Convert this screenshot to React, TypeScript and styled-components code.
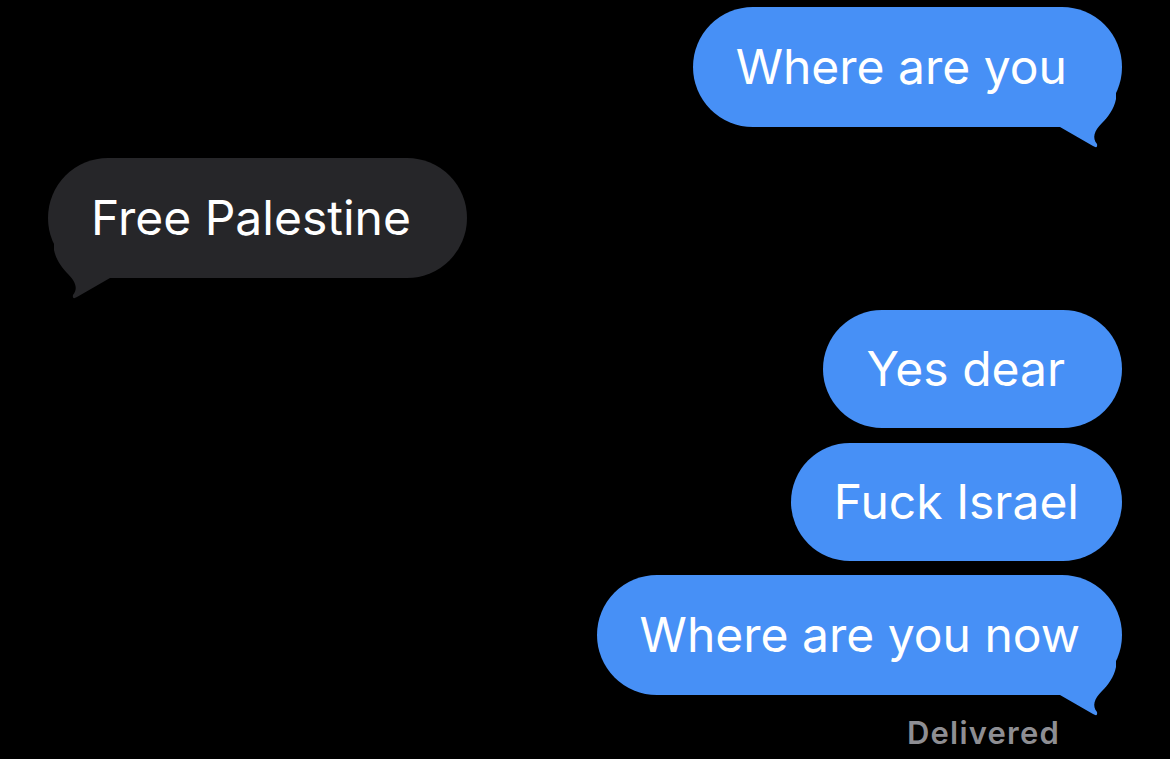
import React from "react";
import styled, { createGlobalStyle } from "styled-components";

const Global = createGlobalStyle`
  html, body { margin: 0; padding: 0; background: #000; }
  body { font-family: Inter, "Noto Sans", sans-serif; -webkit-font-smoothing: antialiased; }
`;

const Thread = styled.div`
  width: 1170px;
  height: 759px;
  background: #000;
  box-sizing: border-box;
  padding: 7px 48px 0 48px;
  display: flex;
  flex-direction: column;
  overflow: hidden;
`;

const Row = styled.div<{ $sent: boolean; $gap: number }>`
  display: flex;
  justify-content: ${(p) => (p.$sent ? "flex-end" : "flex-start")};
  margin-top: ${(p) => p.$gap}px;
`;

const Bubble = styled.div<{ $sent: boolean; $h: number; $pr: number }>`
  position: relative;
  height: ${(p) => p.$h}px;
  box-sizing: border-box;
  padding: 0 ${(p) => p.$pr}px 2px 43px;
  border-radius: 60px;
  display: flex;
  align-items: center;
  background: ${(p) => (p.$sent ? "#4790f6" : "#262629")};
  color: #fff;
  font-size: 48px;
  font-weight: 400;
  letter-spacing: 0;
  white-space: nowrap;
`;

const TailSvg = styled.svg<{ $sent: boolean }>`
  position: absolute;
  bottom: -22px;
  width: 70px;
  height: 60px;
  ${(p) => (p.$sent ? "right: 0;" : "left: 0; transform: scaleX(-1);")}
`;

const Status = styled.div`
  align-self: flex-end;
  margin-top: 19px;
  margin-right: 62px;
  color: #8e8e93;
  font-size: 31px;
  font-weight: 600;
  letter-spacing: 1.2px;
`;

const Tail = ({ sent }: { sent: boolean }) => (
  <TailSvg $sent={sent} viewBox="0 0 70 60">
    <path
      d="M0 0 L0 38 L8 38 L41 57 Q46 60 45 55 C40 49 42 42 50 34 C56 28 62 20 64 10 L64 0 Z"
      fill={sent ? "#4790f6" : "#262629"}
    />
  </TailSvg>
);

type Msg = { text: string; sent: boolean; tail: boolean; gap: number; h: number; pr: number };

const messages: Msg[] = [
  { text: "Where are you", sent: true, tail: true, gap: 0, h: 120, pr: 55 },
  { text: "Free Palestine", sent: false, tail: true, gap: 31, h: 120, pr: 56 },
  { text: "Yes dear", sent: true, tail: false, gap: 32, h: 118, pr: 57 },
  { text: "Fuck Israel", sent: true, tail: false, gap: 15, h: 118, pr: 43 },
  { text: "Where are you now", sent: true, tail: true, gap: 14, h: 120, pr: 42 },
];

export default function App() {
  return (
    <>
      <Global />
      <Thread>
        {messages.map((m, i) => (
          <Row key={i} $sent={m.sent} $gap={m.gap}>
            <Bubble $sent={m.sent} $h={m.h} $pr={m.pr}>
              {m.tail && <Tail sent={m.sent} />}
              {m.text}
            </Bubble>
          </Row>
        ))}
        <Status>Delivered</Status>
      </Thread>
    </>
  );
}
